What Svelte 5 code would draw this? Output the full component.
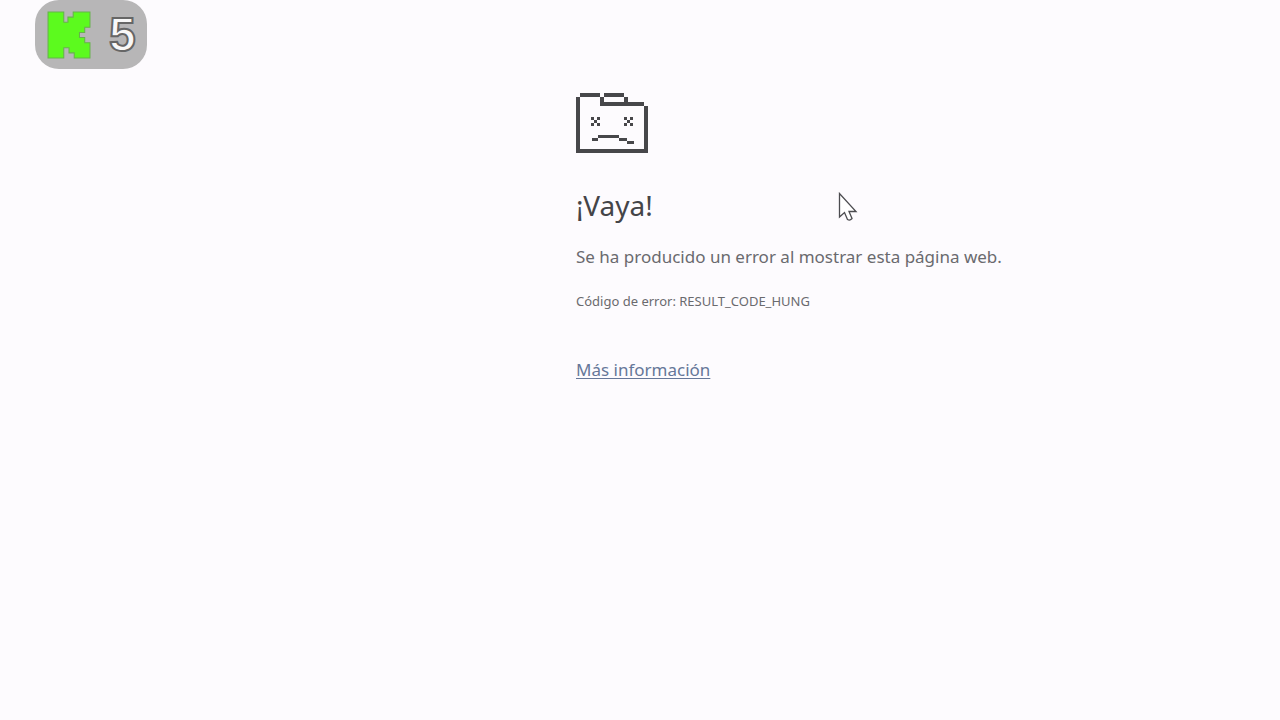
<script lang="ts">
  let {
    title = '¡Vaya!',
    message = 'Se ha producido un error al mostrar esta página web.',
    errorCode = 'RESULT_CODE_HUNG',
    count = 5,
  }: {
    title?: string
    message?: string
    errorCode?: string
    count?: number
  } = $props()

  // one eye is a 3x3 grid with the corners and the centre filled
  const eye = [
    [0, 0],
    [6, 0],
    [3, 3],
    [0, 6],
    [6, 6],
  ]
</script>

<svelte:head>
  <title>{title}</title>
</svelte:head>

<div class="badge">
  <svg width="44" height="48" viewBox="0 0 42 47" preserveAspectRatio="none" aria-hidden="true">
    <path
      d="M1 1H16V11H20V6H25V1H41V16H36V21H31V26H36V31H41V46H26V41H21V36H16V46H1Z"
      fill="#5cfa1e"
      stroke="#65b34a"
      stroke-width="1"
    />
  </svg>
  <span class="count">{count}</span>
</div>

<main>
  <svg class="sad-tab" width="72" height="60" viewBox="0 0 72 60" shape-rendering="crispEdges" aria-hidden="true">
    <path d="M4 0h20v4H4zM28 0h20v4H28zM0 4h4v52h64V13h4v47H0zM24 4h4v5h40v4H24zM48 4h4v5h-4z" />
    {#each [15, 48] as left (left)}
      {#each eye as [x, y]}
        <rect x={left + x} y={24 + y} width="3" height="3" />
      {/each}
    {/each}
    <path d="M22 42h21v3H22zM16 45h6v3h-6zM43 45h8v3h-8zM51 48h7v3h-7z" />
  </svg>
  <h1>{title}</h1>
  <p class="message">{message}</p>
  <p class="code">Código de error: {errorCode}</p>
  <a href="#help">Más información</a>
</main>

<svg class="pointer" width="20" height="30" viewBox="0 0 20 30" aria-hidden="true">
  <path d="M1.5 1.5V25L6.5 20.500L9.500 27.500Q12 29 14 26.500L11 19.500H18Z" fill="#fff" stroke="#4c4c50" stroke-width="1.300" />
</svg>

<style>
  :global(body) {
    margin: 0;
    background: #fdfbfe;
  }
  main {
    padding: 93px 24px 24px 45%;
    font-family: 'Noto Sans', 'Open Sans', sans-serif;
    color: #6a6a6e;
  }
  .sad-tab {
    display: block;
    fill: #47474a;
  }
  h1 {
    margin: 32px 0 0;
    font-size: 28px;
    font-weight: 400;
    line-height: 40px;
    color: #444448;
  }
  p {
    margin: 0;
  }
  .message {
    margin-top: 20px;
    font-size: 17px;
    line-height: 24px;
  }
  .code {
    margin: 23px 0 48px;
    font-size: 13px;
    line-height: 18px;
  }
  a {
    font-size: 17px;
    line-height: 24px;
    color: #667799;
    text-underline-offset: 2px;
  }
  .badge {
    position: absolute;
    top: 0;
    left: 35px;
    display: flex;
    align-items: center;
    gap: 18px;
    padding: 0 11px 0 12px;
    height: 69px;
    border-radius: 24px;
    background: #b7b6b7;
  }
  .count {
    font: 700 48px/69px 'Liberation Sans', Arial, sans-serif;
    color: #f8f8f8;
    -webkit-text-stroke: 2px #666;
  }
  .pointer {
    position: absolute;
    top: 192px;
    left: 838px;
  }
</style>
